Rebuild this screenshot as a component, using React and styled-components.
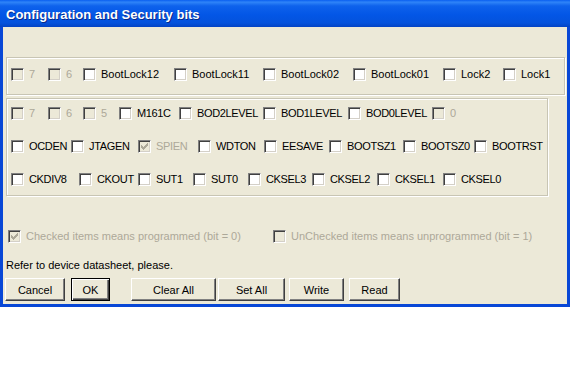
import styled, { createGlobalStyle } from "styled-components";

const GlobalStyle = createGlobalStyle`
  html, body {
    margin: 0;
    padding: 0;
    background: #fff;
  }
  body {
    font-family: "Liberation Sans", Arial, sans-serif;
    font-size: 11px;
  }
`;

// positions follow the original dialog, each item has a fixed width
const lockRow = [
  { label: "7", w: 37, disabled: true },
  { label: "6", w: 35, disabled: true },
  { label: "BootLock12", w: 91 },
  { label: "BootLock11", w: 89 },
  { label: "BootLock02", w: 90 },
  { label: "BootLock01", w: 90 },
  { label: "Lock2", w: 60 },
  { label: "Lock1" },
];

const fuseRows = [
  [
    { label: "7", w: 37, disabled: true },
    { label: "6", w: 35, disabled: true },
    { label: "5", w: 36, disabled: true },
    { label: "M161C", w: 60 },
    { label: "BOD2LEVEL", w: 84 },
    { label: "BOD1LEVEL", w: 85 },
    { label: "BOD0LEVEL", w: 84 },
    { label: "0", disabled: true },
  ],
  [
    { label: "OCDEN", w: 60 },
    { label: "JTAGEN", w: 67 },
    { label: "SPIEN", w: 60, disabled: true, checked: true },
    { label: "WDTON", w: 66 },
    { label: "EESAVE", w: 65 },
    { label: "BOOTSZ1", w: 74 },
    { label: "BOOTSZ0", w: 71 },
    { label: "BOOTRST" },
  ],
  [
    { label: "CKDIV8", w: 68 },
    { label: "CKOUT", w: 59 },
    { label: "SUT1", w: 55 },
    { label: "SUT0", w: 55 },
    { label: "CKSEL3", w: 64 },
    { label: "CKSEL2", w: 65 },
    { label: "CKSEL1", w: 66 },
    { label: "CKSEL0" },
  ],
];

const buttons = [
  { label: "Cancel", w: 60, ml: 0 },
  { label: "OK", w: 39, ml: 6, def: true },
  { label: "Clear All", w: 85, ml: 21 },
  { label: "Set All", w: 67, ml: 2 },
  { label: "Write", w: 55, ml: 4 },
  { label: "Read", w: 51, ml: 5 },
];

const CheckBox = ({ label, w, disabled, checked, tight }) => (
  <Item $w={w}>
    <Box $disabled={disabled}>
      {checked && (
        <svg width="7" height="7" viewBox="0 0 7 7">
          <path
            d="M0 2h1v1h1v1h1v-1h1v-1h1v-1h1v-1h1v3h-1v1h-1v1h-1v1h-1v1h-1v-1h-1v-1h-1v-1h-1z"
            fill={disabled ? "#aca899" : "#000"}
          />
        </svg>
      )}
    </Box>
    <Label $disabled={disabled} $tight={tight}>
      {label}
    </Label>
  </Item>
);

export default function App() {
  return (
    <>
      <GlobalStyle />
      <Window>
        <TitleBar>
          <Title>Configuration and Security bits</Title>
        </TitleBar>
        <Body>
          <LockGroup>
            <Row>
              {lockRow.map((c, i) => (
                <CheckBox key={i} {...c} />
              ))}
            </Row>
          </LockGroup>
          <FuseGroup>
            {fuseRows.map((row, r) => (
              <Row key={r}>
                {row.map((c, i) => (
                  <CheckBox key={i} {...c} tight />
                ))}
              </Row>
            ))}
          </FuseGroup>
          <LegendRow>
            <CheckBox
              label="Checked items means programmed (bit = 0)"
              w={265}
              disabled
              checked
            />
            <CheckBox
              label="UnChecked items means unprogrammed (bit = 1)"
              disabled
            />
          </LegendRow>
          <Hint>Refer to device datasheet, please.</Hint>
          <ButtonBar>
            {buttons.map((b) => (
              <Button key={b.label} $w={b.w} $ml={b.ml} $def={b.def}>
                {b.label}
              </Button>
            ))}
          </ButtonBar>
        </Body>
      </Window>
    </>
  );
}

// ---- styles ----

const Window = styled.div`
  width: 570px;
  box-sizing: border-box;
  background: #ece9d8;
  border: 3px solid #0847d6;
  border-top: none;
`;

const TitleBar = styled.div`
  height: 27px;
  margin: 0 -3px;
  display: flex;
  align-items: center;
  padding-left: 6px;
  background: linear-gradient(
    to bottom,
    #0a5ff0 0%,
    #2f84f8 8%,
    #0e62ec 22%,
    #0356e6 55%,
    #0452dc 85%,
    #0343c4 100%
  );
`;

const Title = styled.span`
  color: #fff;
  font-family: "Liberation Sans", Arial, sans-serif;
  font-weight: bold;
  font-size: 13px;
  text-shadow: 1px 1px 0 #0a2a88;
  margin-top: 1px;
`;

const Body = styled.div`
  display: flex;
  flex-direction: column;
  padding: 30px 0 3px 0;
`;

const Group = styled.div`
  box-sizing: border-box;
  margin-left: 3px;
  border: 1px solid #c8c5b4;
  box-shadow: inset 1px 1px 0 #fff, 1px 1px 0 #fff;
  display: flex;
  flex-direction: column;
  padding-left: 4px;
`;

const LockGroup = styled(Group)`
  width: 559px;
  height: 38px;
  padding-top: 10px;
`;

const FuseGroup = styled(Group)`
  width: 542px;
  height: 98px;
  margin-top: 3px;
  padding-top: 8px;
  gap: 20px;
`;

const Row = styled.div`
  display: flex;
  align-items: center;
  height: 13px;
`;

const Item = styled.div`
  display: flex;
  align-items: center;
  flex: none;
  width: ${({ $w }) => ($w ? `${$w}px` : "auto")};
  height: 13px;
`;

const Box = styled.span`
  box-sizing: border-box;
  flex: none;
  width: 13px;
  height: 13px;
  border: 1px solid;
  border-color: #808080 #fff #fff #808080;
  box-shadow: inset 1px 1px 0 #404040, inset -1px -1px 0 #d4d0c8;
  background: ${({ $disabled }) => ($disabled ? "#ece9d8" : "#fff")};
  display: flex;
  align-items: center;
  justify-content: center;
`;

const Label = styled.span`
  margin-left: 5px;
  white-space: nowrap;
  line-height: 13px;
  letter-spacing: ${({ $tight }) => ($tight ? "-0.35px" : "0")};
  color: ${({ $disabled }) => ($disabled ? "#aca899" : "#000")};
`;

const LegendRow = styled.div`
  display: flex;
  margin-top: 34px;
  padding-left: 5px;
`;

const Hint = styled.div`
  margin-top: 16px;
  padding-left: 3px;
  line-height: 13px;
  color: #000;
`;

const ButtonBar = styled.div`
  display: flex;
  margin-top: 6px;
  padding-left: 2px;
`;

const Button = styled.button`
  box-sizing: border-box;
  width: ${({ $w }) => $w}px;
  height: 23px;
  margin-left: ${({ $ml }) => $ml}px;
  padding: 0;
  font-family: "Liberation Sans", Arial, sans-serif;
  font-size: 11px;
  color: #000;
  background: #ece9d8;
  border: 1px solid;
  border-color: ${({ $def }) =>
    $def ? "#000" : "#fff #404040 #404040 #fff"};
  box-shadow: ${({ $def }) =>
    $def
      ? "inset 1px 1px 0 #fff, inset -1px -1px 0 #404040, inset -2px -2px 0 #808080"
      : "inset -1px -1px 0 #808080"};
`;
